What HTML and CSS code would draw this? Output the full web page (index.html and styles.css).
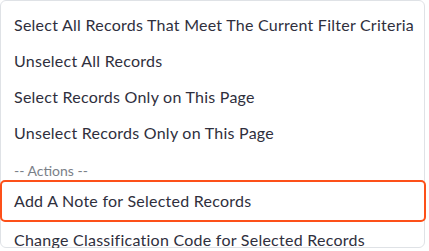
FILE: index.html
```html
<!DOCTYPE html>
<html>
<head>
<title>Record Actions</title>
<link rel="stylesheet" href="styles.css">
</head>
<body>

<div class="menu">
    <div class="item">Select All Records That Meet The Current Filter Criteria</div>
    <div class="item">Unselect All Records</div>
    <div class="item">Select Records Only on This Page</div>
    <div class="item">Unselect Records Only on This Page</div>
    <div class="header">-- Actions --</div>
    <div class="item focused">Add A Note for Selected Records</div>
    <div class="item">Change Classification Code for Selected Records</div>
</div>

</body>
</html>
```

FILE: styles.css
```css
body {
    margin: 0;
    font-family: Lato, "Open Sans", sans-serif;
    background: #fff;
}
.menu {
    width: 425px;
    height: 248px;
    border: 1px solid #dfe2e6;
    border-radius: 6px;
    padding-top: 6px;
    box-sizing: border-box;
}
.item {
    height: 36px;
    line-height: 36px;
    padding-left: 13px;
    font-size: 16px;
    letter-spacing: 0.25px;
    color: #2f2f3d;
    white-space: nowrap;
}
.header {
    height: 29px;
    padding: 10px 0 0 13px;
    box-sizing: border-box;
    line-height: 19px;
    font-size: 14px;
    color: #7a8088;
}
.item.focused {
    height: 42px;
    line-height: 38px;
    margin: 0 -2px 0 -1px;
    padding-left: 12px;
    border: 2px solid #fd5019;
    border-radius: 5px;
    box-sizing: border-box;
}
```
